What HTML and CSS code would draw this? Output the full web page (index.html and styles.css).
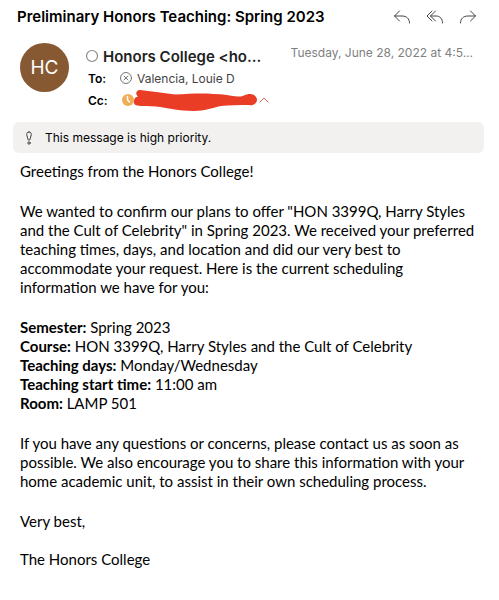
FILE: index.html
```html
<!DOCTYPE html>
<html lang="en">
<head>
<meta charset="utf-8">
<meta name="viewport" content="width=device-width, initial-scale=1">
<title>Preliminary Honors Teaching: Spring 2023</title>
<link rel="stylesheet" href="styles.css">
</head>
<body>
<main class="message">
  <header class="subject-bar">
    <h1 class="subject">Preliminary Honors Teaching: Spring 2023</h1>
    <div class="actions">
      <button class="action" type="button" aria-label="Reply">
        <svg viewBox="0 0 18 14"><path d="M6.5 1 1.500 6l5 5M1.500 6H9c4.500 0 7.500 2.500 7.500 7"/></svg>
      </button>
      <button class="action" type="button" aria-label="Reply all">
        <svg viewBox="0 0 18 14"><path d="M6 1 1 6l5 5M9.500 1l-5 5 5 5M4.500 6H10c4 0 6.500 2.500 6.500 7"/></svg>
      </button>
      <button class="action" type="button" aria-label="Forward">
        <svg viewBox="0 0 18 14"><path d="M11.500 1l5 5-5 5M16.500 6H9c-4.500 0-7.500 2.500-7.500 7"/></svg>
      </button>
    </div>
  </header>

  <section class="envelope">
    <div class="avatar">HC</div>
    <div class="people">
      <div class="sender">
        <svg class="presence" viewBox="0 0 14 14"><circle cx="7" cy="7" r="5.500"/></svg>
        <span class="sender-name">Honors College &lt;ho...</span>
      </div>
      <div class="recipient">
        <span class="label">To:</span>
        <svg class="status" viewBox="0 0 14 14"><circle cx="7" cy="7" r="5.500"/><path d="m5 5 4 4m0-4-4 4"/></svg>
        <span>Valencia, Louie D</span>
      </div>
      <div class="recipient">
        <span class="label">Cc:</span>
        <svg class="redaction" viewBox="0 0 138 22">
          <circle cx="9" cy="11" r="6" fill="#efad55"/>
          <path d="M8.500 7.500V11l2 2" fill="none" stroke="#fff" stroke-width="1.500"/>
          <path d="M21 1C31 2 43 4 56 5.500C70 5 82 4 94 5C104 5 112 7 119 7.500C124 8 126 5 131 5C135 5 138 8 138 11C138 14 134 17 130 16C120 16 110 16 102 17C92 19 86 22 75 22C60 22 48 19 37 17.500C30 17 24 17.500 18 16.500C15 16 14.500 14 15 12C15 9 17 8 19 7.500C16 5 17 1 21 1z" fill="#e93d25"/>
        </svg>
        <button class="collapse" type="button" aria-label="Collapse recipients">
          <svg viewBox="0 0 10 6"><path d="m1 5 4-4 4 4"/></svg>
        </button>
      </div>
    </div>
    <time class="date" datetime="2022-06-28">Tuesday, June 28, 2022 at 4:5...</time>
  </section>

  <div class="priority">
    <svg class="priority-icon" viewBox="0 0 8 14"><path d="M4 1C2.300 1 1.500 2.200 1.700 3.700L3.200 9h1.600l1.500-5.300C6.500 2.200 5.700 1 4 1z"/><circle cx="4" cy="12" r="1.200"/></svg>
    <span>This message is high priority.</span>
  </div>

  <article class="body">
    <p>Greetings from the Honors College!</p>
    <p>We wanted to confirm our plans to offer "HON 3399Q, Harry Styles and the Cult of Celebrity" in Spring 2023. We received your preferred teaching times, days, and location and did our very best to accommodate your request. Here is the current scheduling information we have for you:</p>
    <p>
      <strong>Semester:</strong> Spring 2023<br>
      <strong>Course:</strong> HON 3399Q, Harry Styles and the Cult of Celebrity<br>
      <strong>Teaching days:</strong> Monday/Wednesday<br>
      <strong>Teaching start time:</strong> 11:00 am<br>
      <strong>Room:</strong> LAMP 501
    </p>
    <p>If you have any questions or concerns, please contact us as soon as possible. We also encourage you to share this information with your home academic unit, to assist in their own scheduling process.</p>
    <p>Very best,<br><br>The Honors College</p>
  </article>
</main>
</body>
</html>
```
FILE: styles.css
```css
* {
  box-sizing: border-box;
}

body {
  margin: 0;
  background: #fff;
  color: #000;
  font-family: Inter, "Liberation Sans", sans-serif;
}

svg {
  display: block;
  flex: none;
  fill: none;
  stroke-linecap: round;
  stroke-linejoin: round;
}

button {
  padding: 0;
  border: 0;
  background: none;
}

.subject-bar {
  display: flex;
  align-items: center;
  justify-content: space-between;
  padding: 7px 22px 0 17px;
}

.subject {
  margin: 0;
  font-size: 15px;
  line-height: 20px;
  font-weight: 600;
  white-space: nowrap;
}

.actions {
  display: flex;
  gap: 15px;
}

.action svg {
  width: 18px;
  height: 14px;
  stroke: #444;
}

.envelope {
  display: flex;
  padding: 16px 26px 0 20px;
}

.avatar {
  display: flex;
  flex: none;
  align-items: center;
  justify-content: center;
  width: 49px;
  height: 49px;
  border-radius: 50%;
  background: #865933;
  color: #fff;
  font-size: 19px;
}

.people {
  flex: none;
  margin-left: 16px;
  padding-top: 2px;
}

.sender,
.recipient {
  display: flex;
  align-items: center;
}

.sender {
  gap: 4px;
  height: 22px;
  color: #222;
  font-size: 15px;
  font-weight: 600;
}

.presence {
  width: 14px;
  height: 14px;
  stroke: #888;
  stroke-width: 1.2;
}

.recipient {
  height: 22px;
  padding-left: 3px;
  color: #444;
  font-size: 12px;
}

.label {
  width: 31px;
  color: #000;
  font-weight: 600;
}

.status {
  width: 14px;
  height: 14px;
  margin-right: 4px;
  stroke: #777;
}

.redaction {
  width: 138px;
  height: 22px;
}

.collapse {
  margin-left: 2px;
}

.collapse svg {
  width: 10px;
  height: 6px;
  stroke: #e0674c;
}

.date {
  flex: 1;
  padding-top: 2px;
  color: #808080;
  font-size: 12px;
  line-height: 16px;
  text-align: right;
  white-space: nowrap;
}

.recipient:last-child {
  margin-right: -20px;
}

.priority {
  display: flex;
  align-items: center;
  gap: 12px;
  height: 31px;
  margin: 11px 15px 0 13px;
  padding-left: 12px;
  border-radius: 6px;
  background: #f2f1f0;
  font-size: 12px;
}

.priority-icon {
  width: 8px;
  height: 14px;
  stroke: #444;
}

.body {
  padding: 9px 16px 24px 20px;
  font-family: Lato, Carlito, sans-serif;
  font-size: 15px;
  line-height: 19px;
}

.body p {
  margin: 0 0 21px;
}
```
